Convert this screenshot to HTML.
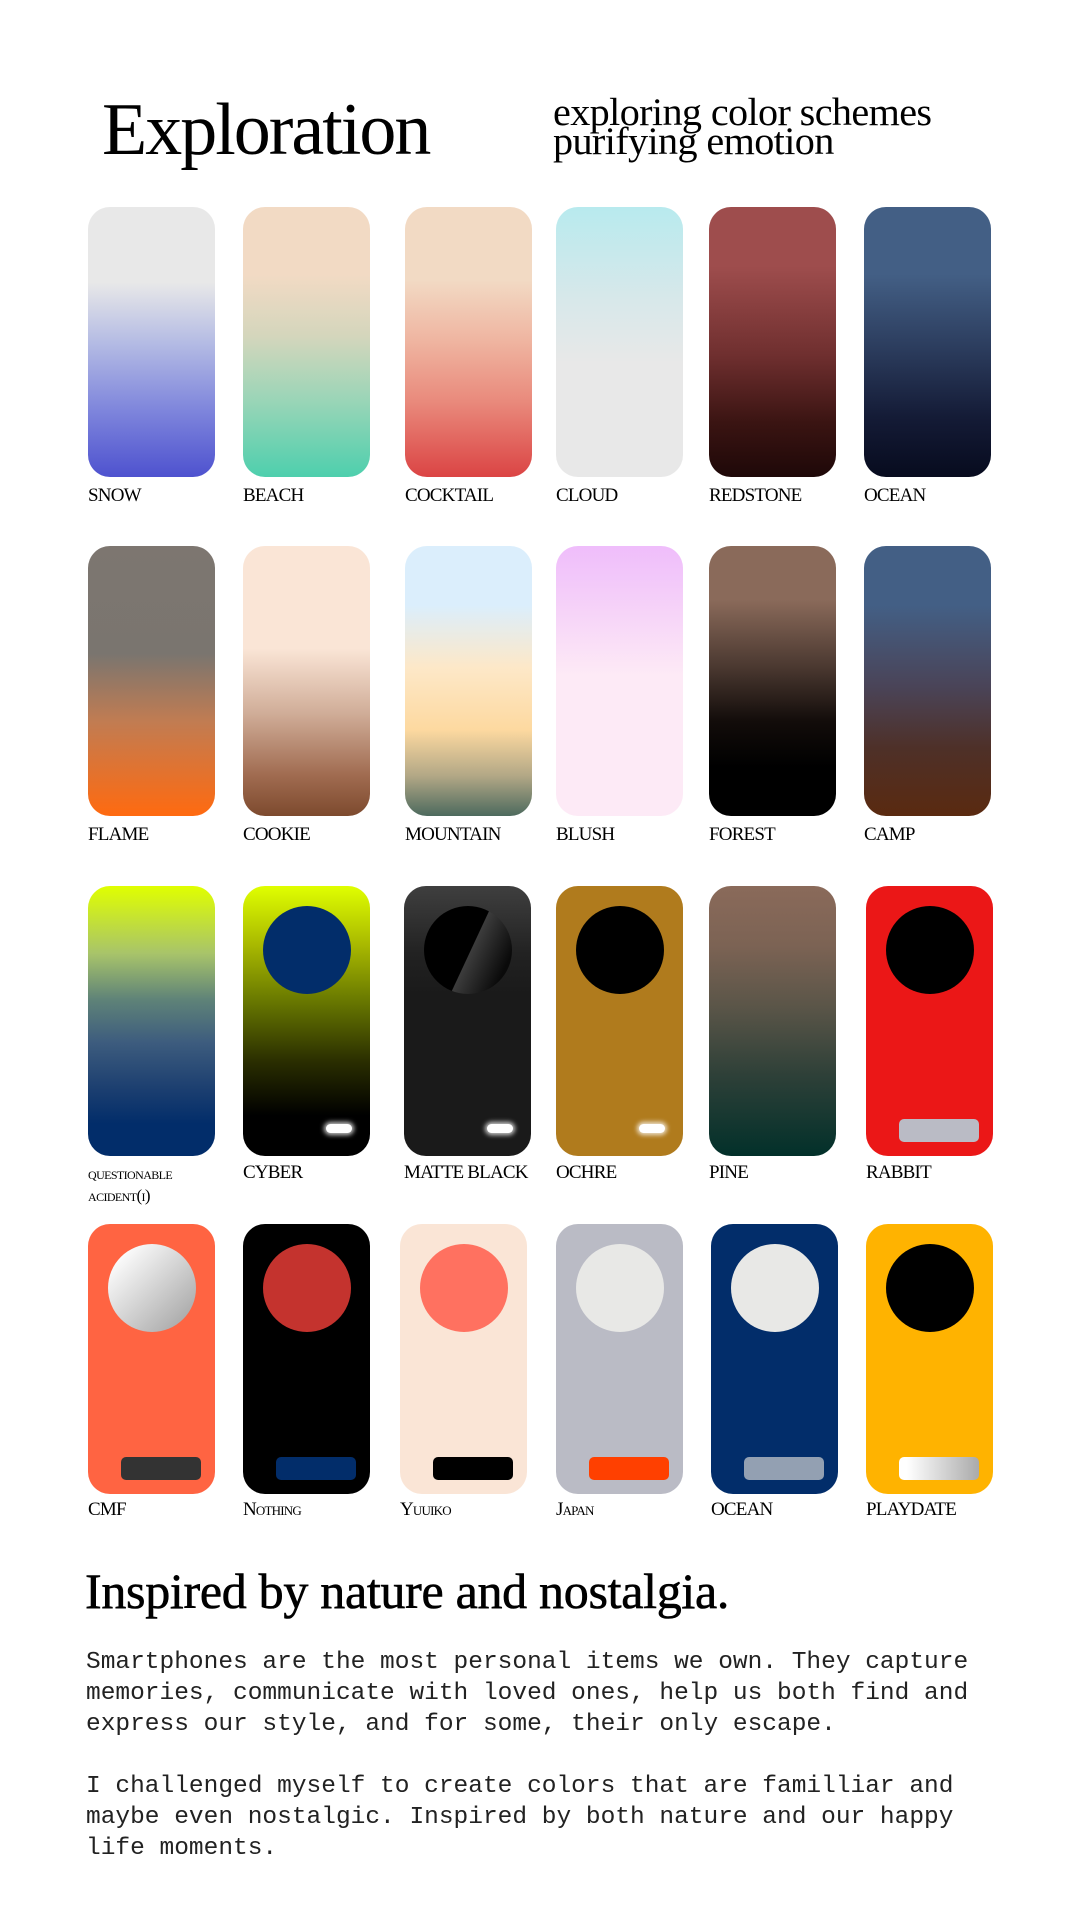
<!DOCTYPE html>
<html><head><meta charset="utf-8"><style>
*{margin:0;padding:0;box-sizing:border-box}
body{width:1080px;height:1920px;background:#fff;position:relative;overflow:hidden;font-family:"Liberation Serif",serif;color:#000}
.t{position:absolute;white-space:nowrap}
.c{position:absolute;width:127px;height:270px;border-radius:22px;overflow:hidden}
.o{position:absolute;left:20px;top:20px;width:88px;height:88px;border-radius:50%}
.b{position:absolute;left:33px;top:233px;width:80px;height:23px;border-radius:5px}
.g{position:absolute;left:83px;top:238px;width:26px;height:9px;border-radius:5px;background:#fff;box-shadow:0 0 5px 2px rgba(255,255,255,.8)}
.l{position:absolute;font-size:19px;letter-spacing:-0.8px;white-space:nowrap;line-height:20px}
.sc{font-variant:small-caps}
p{position:absolute;left:86px;font-family:"Liberation Mono",monospace;font-size:24.5px;line-height:31px;white-space:pre;color:#222}
</style></head><body>
<div class="t" style="left:102px;top:85px;font-size:74px;letter-spacing:-2px;line-height:90px">Exploration</div>
<div class="t" style="left:553px;top:98px;font-size:39px;letter-spacing:-0.6px;line-height:29px;transform:scaleX(1.03);transform-origin:left">exploring color schemes<br>purifying emotion</div>

<!-- row 1 -->
<div class="c" style="left:88px;top:207px;background:linear-gradient(#e8e8e8 0%,#e8e8e8 28%,#b5bce4 50%,#7f86dc 75%,#4e52cf 100%)"></div>
<div class="c" style="left:243px;top:207px;background:linear-gradient(#f2dac4 0%,#f2dac4 25%,#d4d6bc 48%,#99d5b7 72%,#4ecfad 100%)"></div>
<div class="c" style="left:405px;top:207px;background:linear-gradient(#f2dac4 0%,#f2dac4 27%,#efb4a0 50%,#e98a7c 72%,#db4444 100%)"></div>
<div class="c" style="left:556px;top:207px;background:linear-gradient(#b8eaee 0%,#d8e8ea 35%,#e8e8e8 58%,#e8e8e8 100%)"></div>
<div class="c" style="left:709px;top:207px;background:linear-gradient(#9e4d4d 0%,#9e4d4d 22%,#6f2f2f 55%,#3a1412 80%,#1e0808 100%)"></div>
<div class="c" style="left:864px;top:207px;background:linear-gradient(#435f85 0%,#435f85 25%,#2c3d5e 52%,#141b36 78%,#070b1e 100%)"></div>
<div class="l" style="left:88px;top:486px">SNOW</div>
<div class="l" style="left:243px;top:486px">BEACH</div>
<div class="l" style="left:405px;top:486px">COCKTAIL</div>
<div class="l" style="left:556px;top:486px">CLOUD</div>
<div class="l" style="left:709px;top:486px">REDSTONE</div>
<div class="l" style="left:864px;top:486px">OCEAN</div>

<!-- row 2 -->
<div class="c" style="left:88px;top:546px;background:linear-gradient(#7d7670 0%,#7a756f 40%,#c17c52 65%,#ff6a10 100%)"></div>
<div class="c" style="left:243px;top:546px;background:linear-gradient(#fae5d6 0%,#fae5d6 38%,#d0ad98 62%,#a06b50 85%,#7d4a2e 100%)"></div>
<div class="c" style="left:405px;top:546px;background:linear-gradient(#dbeefc 0%,#dbeefc 22%,#fde8c8 45%,#fdd9a0 68%,#b3a886 85%,#4d6a5e 100%)"></div>
<div class="c" style="left:556px;top:546px;background:linear-gradient(#efbdfb 0%,#f6d4f8 25%,#fdeaf6 48%,#fdeaf6 100%)"></div>
<div class="c" style="left:709px;top:546px;background:linear-gradient(#8a6a5a 0%,#8a6a5a 20%,#4a3830 45%,#120c0a 65%,#000 82%,#000 100%)"></div>
<div class="c" style="left:864px;top:546px;background:linear-gradient(#435f85 0%,#435f85 22%,#4a4458 52%,#4e3028 75%,#5a2a10 100%)"></div>
<div class="l" style="left:88px;top:825px">FLAME</div>
<div class="l" style="left:243px;top:825px">COOKIE</div>
<div class="l" style="left:405px;top:825px">MOUNTAIN</div>
<div class="l" style="left:556px;top:825px">BLUSH</div>
<div class="l" style="left:709px;top:825px">FOREST</div>
<div class="l" style="left:864px;top:825px">CAMP</div>

<!-- row 3 -->
<div class="c" style="left:88px;top:886px;background:linear-gradient(#e0ff00 0%,#a8c46a 25%,#5f8378 42%,#3d5c7e 58%,#1c3f70 75%,#022d6a 88%,#022d6a 100%)"></div>
<div class="c" style="left:243px;top:886px;background:linear-gradient(#e0ff00 0%,#a8b800 22%,#6a7a00 42%,#2a2e00 65%,#000 85%,#000 100%)"><div class="o" style="background:#022d6a"></div><div class="g"></div></div>
<div class="c" style="left:404px;top:886px;background:linear-gradient(#3f3f3f 0%,#222 25%,#1a1a1a 40%,#1a1a1a 100%)"><div class="o" style="background:linear-gradient(115deg,#000 52%,#3c3c3c 52.5%,#0a0a0a 85%)"></div><div class="g"></div></div>
<div class="c" style="left:556px;top:886px;background:#b07b1d"><div class="o" style="background:#000"></div><div class="g" style="left:83px"></div></div>
<div class="c" style="left:709px;top:886px;background:linear-gradient(#8a6a5a 0%,#7c6354 22%,#5a5548 45%,#2e4038 70%,#02302a 100%)"></div>
<div class="c" style="left:866px;top:886px;background:#eb1717"><div class="o" style="background:#000"></div><div class="b" style="background:#babbc5"></div></div>
<div class="l sc" style="left:88px;top:1163px;font-size:17px;line-height:22px;letter-spacing:-0.6px">questionable<br>acident(i)</div>
<div class="l" style="left:243px;top:1163px">CYBER</div>
<div class="l" style="left:404px;top:1163px">MATTE BLACK</div>
<div class="l" style="left:556px;top:1163px">OCHRE</div>
<div class="l" style="left:709px;top:1163px">PINE</div>
<div class="l" style="left:866px;top:1163px">RABBIT</div>

<!-- row 4 -->
<div class="c" style="left:88px;top:1224px;background:#ff6442"><div class="o" style="background:linear-gradient(135deg,#fafafa 15%,#a9a9a9 90%)"></div><div class="b" style="background:#333"></div></div>
<div class="c" style="left:243px;top:1224px;background:#000"><div class="o" style="background:#c4332e"></div><div class="b" style="background:#022d6a"></div></div>
<div class="c" style="left:400px;top:1224px;background:#fae5d6"><div class="o" style="background:#ff7160"></div><div class="b" style="background:#000"></div></div>
<div class="c" style="left:556px;top:1224px;background:#babbc5"><div class="o" style="background:#e8e8e6"></div><div class="b" style="background:#ff4000"></div></div>
<div class="c" style="left:711px;top:1224px;background:#022d6a"><div class="o" style="background:#e8e8e6"></div><div class="b" style="background:#93a0b2"></div></div>
<div class="c" style="left:866px;top:1224px;background:#ffb300"><div class="o" style="background:#000"></div><div class="b" style="background:linear-gradient(90deg,#fff 10%,#aaa 100%)"></div></div>
<div class="l" style="left:88px;top:1500px">CMF</div>
<div class="l sc" style="left:243px;top:1500px">Nothing</div>
<div class="l sc" style="left:400px;top:1500px">Yuuiko</div>
<div class="l sc" style="left:556px;top:1500px">Japan</div>
<div class="l" style="left:711px;top:1500px">OCEAN</div>
<div class="l" style="left:866px;top:1500px">PLAYDATE</div>

<div class="t" style="left:85px;top:1563px;font-size:50px;letter-spacing:-0.3px;line-height:56px;-webkit-text-stroke:0.6px #000">Inspired by nature and nostalgia.</div>
<p style="top:1647px">Smartphones are the most personal items we own. They capture
memories, communicate with loved ones, help us both find and
express our style, and for some, their only escape.

I challenged myself to create colors that are familliar and
maybe even nostalgic. Inspired by both nature and our happy
life moments.</p>
</body></html>
